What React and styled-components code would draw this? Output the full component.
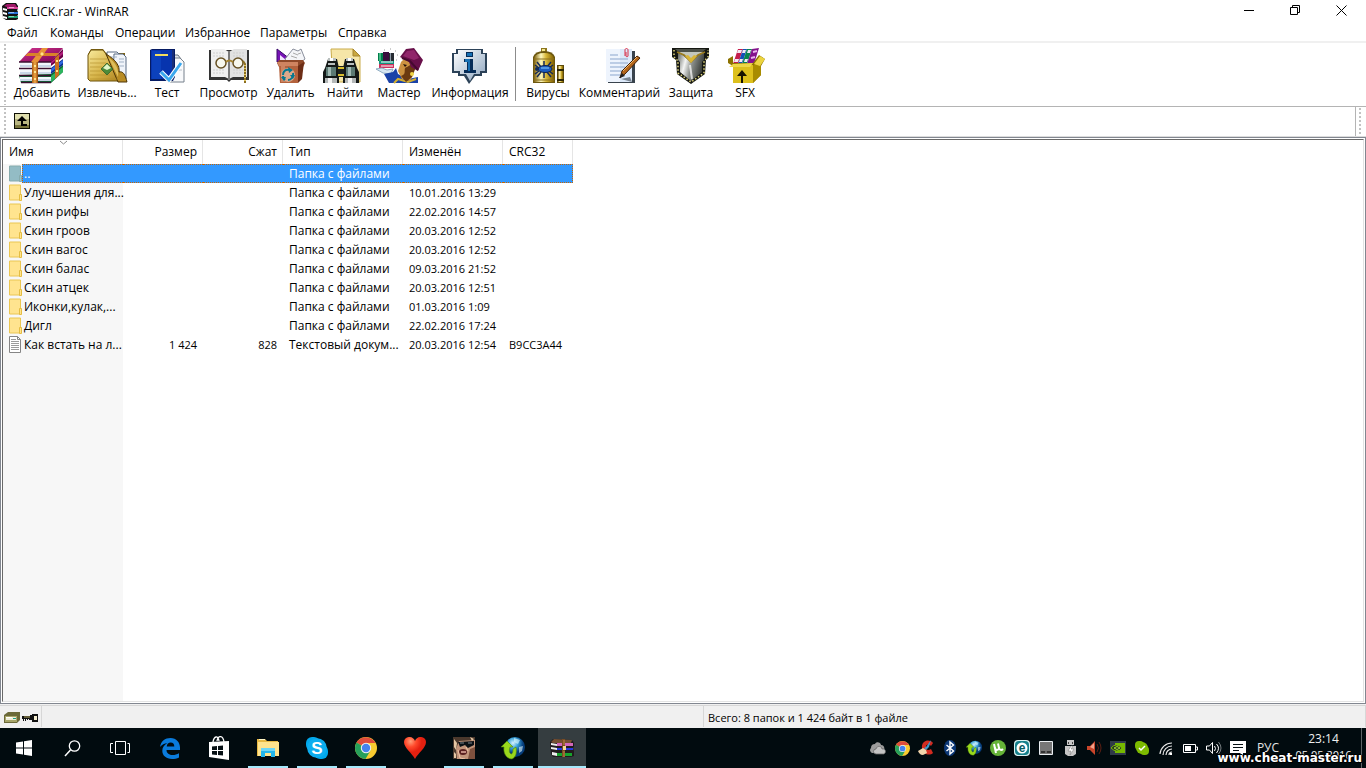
import React from "react";
import styled, { createGlobalStyle, css } from "styled-components";

const Global = createGlobalStyle`
  * { box-sizing: border-box; }
  html, body { margin: 0; padding: 0; }
  body {
    font-family: "Open Sans", "Noto Sans", sans-serif;
    font-size: 12px;
    line-height: 16px;
    color: #000;
    background: #fff;
  }
  button, input { font: inherit; color: inherit; border: 0; padding: 0; margin: 0; background: none; }
  svg { display: block; flex: none; }
`;

const Page = styled.div`
  min-height: 100vh;
  display: flex;
  flex-direction: column;
  position: relative;
`;

/* ---------- window chrome ---------- */

const TitleBar = styled.header`
  height: 23px;
  display: flex;
  align-items: center;
  padding-left: 2px;
  gap: 4px;
`;
const Title = styled.h1`
  flex: 1;
  margin: 0;
  font-size: 12px;
  font-weight: 400;
`;
const CaptionButtons = styled.div`
  display: flex;
  align-self: flex-start;
  margin-right: 2px;
`;
const CaptionButton = styled.button`
  width: 46px;
  height: 20px;
  display: grid;
  place-items: center;
`;
const MenuBar = styled.nav`
  height: 20px;
  display: flex;
  border-bottom: 2px solid #f0f0f0;
`;
const MenuItem = styled.button`
  width: ${(p) => p.$w}px;
  padding: 2px 0 0 7px;
  text-align: left;
  white-space: nowrap;
`;

const Toolbar = styled.div`
  height: 64px;
  display: flex;
  border-bottom: 1px solid #b4b4b4;
`;
const Grip = styled.span`
  width: 2px;
  margin: ${(p) => p.$m || "1px 4px 1px 4px"};
  flex: none;
  background: repeating-linear-gradient(#c2c2c2 0 2px, transparent 2px 4px);
`;
const ToolButton = styled.button`
  width: ${(p) => p.$w}px;
  flex: none;
  display: flex;
  flex-direction: column;
  align-items: center;
  gap: 1px;
  padding-top: 5px;
  white-space: nowrap;
`;
const ToolDivider = styled.span`
  width: 1px;
  margin: 4px 5px 5px 1px;
  background: #8c8c8c;
`;

const AddressBar = styled.div`
  height: 30px;
  display: flex;
  align-items: stretch;
  border-bottom: 1px solid #dcdcdc;
`;
const UpButton = styled.button`
  width: 16px;
  height: 16px;
  margin: 6px 0 0 4px;
`;
const PathField = styled.input`
  flex: 1;
  min-width: 0;
  padding: 0 8px;
  border-right: 1px solid #b4b4b4;
  outline: none;
`;

/* ---------- file list ---------- */

const ListFrame = styled.main`
  flex: 1;
  display: flex;
  border: 1px solid #828790;
  padding: 1px;
  background: #fff;
`;
const ListView = styled.div`
  flex: 1;
  border: 1px solid;
  border-color: #696969 #e3e3e3 #e3e3e3 #696969;
  background: linear-gradient(#f7f7f7, #f7f7f7) 0 0 / 120px 100% no-repeat;
`;
const Table = styled.table`
  width: 570px;
  table-layout: fixed;
  border-collapse: separate;
  border-spacing: 0;
`;
const HeadCell = styled.th`
  height: 24px;
  width: ${(p) => p.$w}px;
  padding: 0 5px 0 6px;
  font-weight: 400;
  text-align: ${(p) => (p.$right ? "right" : "left")};
  background: #fff;
  border-right: 1px solid #e5e5e5;
  position: relative;
`;
const SortMark = styled.svg`
  position: absolute;
  left: 56px;
  top: 0;
`;
const Cell = styled.td`
  height: 19px;
  padding: 0 6px;
  font-size: ${(p) => (p.$numeric ? 11 : 12)}px;
  line-height: 17px;
  text-align: ${(p) => (p.$right ? "right" : "left")};
  white-space: nowrap;
  border: 0 dotted transparent;
  border-width: 1px 0;
`;
const NameCell = styled(Cell)`
  padding: 0;
  border: 0;
`;
const NameWrap = styled.div`
  height: 19px;
  display: flex;
  align-items: center;
  padding-left: 5px;
`;
const NameText = styled.span`
  flex: 1;
  min-width: 0;
  height: 19px;
  padding-left: 1px;
  line-height: 17px;
  border: 1px dotted transparent;
  border-right: 0;
`;
const Row = styled.tr`
  ${(p) =>
    p.$selected &&
    css`
      color: #fff;
      ${Cell}:not(${NameCell}), ${NameText} {
        background: #39f;
        border-color: #c86400;
      }
      ${Cell}:last-child { border-right-width: 1px; }
    `}
`;

const StatusBar = styled.footer`
  height: 24px;
  display: flex;
  background: #f0f0f0;
  padding-top: 2px;
  background: linear-gradient(#d7d7d7, #d7d7d7) 0 1px / 100% 1px no-repeat #f0f0f0;
`;
const StatusPart = styled.div`
  display: flex;
  align-items: center;
  flex: ${(p) => (p.$grow ? "1 1 0" : "none")};
  padding: 2px 2px 0 4px;
  gap: 2px;
  font-size: 11px;
  border-right: 1px solid #d7d7d7;
  margin-bottom: 1px;
`;

/* ---------- taskbar ---------- */

const Taskbar = styled.div`
  height: 40px;
  display: flex;
  background: #010b0f;
  color: #fff;
`;
const SystemButtons = styled.div`
  display: flex;
`;
const Apps = styled.div`
  display: flex;
  gap: 1px;
  margin-left: 2px;
  flex: 1;
`;
const TaskButton = styled.button`
  width: 48px;
  height: 40px;
  display: grid;
  place-items: center;
  background-color: ${(p) => (p.$active ? "#353d40" : "transparent")};
  background-image: ${(p) => (p.$open || p.$active ? "linear-gradient(#a5e8fb, #a5e8fb)" : "none")};
  background-size: ${(p) => (p.$active ? 48 : 40)}px 2px;
  background-position: center bottom;
  background-repeat: no-repeat;
`;
const TrayButton = styled.button`
  width: 24px;
  height: 40px;
  display: grid;
  place-items: center;
`;
const Language = styled.button`
  width: 36px;
  text-align: center;
  color: #e6e6e6;
`;
const Clock = styled.time`
  width: 75px;
  padding-top: 3px;
  display: flex;
  flex-direction: column;
  align-items: center;
  line-height: 16px;
  color: #f0f0f0;
`;
const ClockDate = styled.span`
  font-size: 11px;
`;
const ShowDesktop = styled.button`
  width: 5px;
  border-left: 1px solid #5d6467;
`;
const Watermark = styled.div`
  position: absolute;
  right: 4px;
  bottom: 3px;
  font: bold 12px/14px "DejaVu Sans", sans-serif;
  color: #fff;
  text-shadow: 1px 0 #000, -1px 0 #000, 0 1px #000, 0 -1px #000, 1px 1px #000, -1px -1px #000;
`;

/* ---------- toolbar drawings ---------- */

const Big = ({ children }) => (
  <svg width="48" height="36" viewBox="0 0 48 36" aria-hidden="true">{children}</svg>
);

const AddIcon = () => (
  <Big>
    <defs>
      <linearGradient id="ad1" x2="1" y2="1"><stop stopColor="#d0358f" /><stop offset="1" stopColor="#7a0050" /></linearGradient>
      <linearGradient id="ad2"><stop stopColor="#a85a14" /><stop offset=".5" stopColor="#f0a848" /><stop offset="1" stopColor="#96480a" /></linearGradient>
    </defs>
    <path d="M1 27l32-1 12-9v7L33 35H3z" fill="#0c6a34" /><path d="M33 28l12-9v5L33 34z" fill="#2cb45e" />
    <path d="M33 20l12-9v6l-12 9z" fill="#0c2f92" /><path d="M33 21l12-9v3l-12 9z" fill="#2f6ae0" />
    <path d="M33 13L45 1v8l-12 9z" fill="#6c0048" /><path d="M33 14L45 3v3L33 16z" fill="#b01f7c" />
    <path d="M2 15h31v4H2zM2 22h31v4H2zM2 29h31v4H2z" fill="#f2f6fc" />
    <path d="M2 18h31M2 25h31M2 32h31" stroke="#bccbe0" strokeWidth="1.500" />
    <path d="M1 14L14 0h31L33 14z" fill="url(#ad1)" />
    <path d="M1 14h32M1 20.500h32M1 27.500h32M3 34.500h30" stroke="#3a1030" strokeWidth="1.600" />
    <path d="M14 14h6v21h-6z" fill="url(#ad2)" /><path d="M13 14L24 0h6L20 14z" fill="#e89438" />
    <path d="M7 8l3-3h31l-3 3z" fill="#d9822a" /><path d="M37 10l4-4v21l-4 4z" fill="#c97020" />
    <path d="M16 17h2v2h-2zM16 23h2v2h-2zM16 30h2v2h-2zM22 6l2-2 2 2-2 2zM38 12h2v2h-2zM38 22h2v2h-2z" fill="#ffe48a" />
  </Big>
);
const ExtractIcon = () => (
  <Big>
    <defs><linearGradient id="ex1" x2="1" y2="1"><stop stopColor="#f8ea9c" /><stop offset=".5" stopColor="#d8b64c" /><stop offset="1" stopColor="#a47716" /></linearGradient></defs>
    <path d="M5 6l3-5h12l3 4h19v27l-2 1H7l-2-2z" fill="#7e6416" />
    <path d="M24 4h10l4 4v20H24z" fill="#fff" stroke="#586b83" /><path d="M31 6h9l3 3v22H30z" fill="#f0f4fa" stroke="#586b83" /><path d="M27 9h7M36 11h5M36 14h5M36 18h5" stroke="#a1b1c5" />
    <path d="M5 7l3-5h12l3 4 20 27H7l-2-2z" fill="url(#ex1)" stroke="#6b5008" />
    <path d="M23 6c10 6 14 12 13 18 4-1 6 2 8 10h-9z" fill="#b98c24" stroke="#4c3508" /><path d="M25 9c8 6 11 12 10 20z" fill="#ecd374" opacity=".7" />
    <path d="M7 11h17M7 15h16M7 19h12M7 23h12M7 27h20M7 31h28" stroke="#b28d28" opacity=".6" />
    <path d="M18 21l6-6 6 6-6 6z" fill="#4c8a38" stroke="#376126" strokeWidth=".8" /><path d="M20 20l4-4 4 4-4 2z" fill="#e0f6c8" />
  </Big>
);
const TestIcon = () => (
  <Big>
    <path d="M26 7h9l3 4v22H26z" fill="#e4e7ec" stroke="#67727e" /><path d="M30 10h7l4 4v20H25z" fill="#f8f9fb" stroke="#76808c" /><path d="M33 18h6M33 22h6" stroke="#b8c0c8" />
    <path d="M7 2l2-1h23v28l-2 4H7z" fill="#061b62" /><path d="M8 2h21v29H8z" fill="#0734ae" /><path d="M9 3h9v28H9z" fill="#1551cf" opacity=".45" />
    <path d="M12 6h13v2H12z" fill="#f3dd5e" /><path d="M29 2h2v28l-2 2z" fill="#1a2f78" />
    <path d="M18 24l8 8L38 15" fill="none" stroke="#fff" strokeWidth="5" /><path d="M18 24l8 8L38 15" fill="none" stroke="#3ba8ee" strokeWidth="3" />
  </Big>
);
const ViewIcon = () => (
  <Big>
    <path d="M4 2v30h18l2 2 2-2h18V2z" fill="#333" /><path d="M6 1h13l5 3v27l-4-2H6z" fill="#efefef" /><path d="M42 1H29l-5 3v27l4-2h14z" fill="#e2e2e2" />
    <path d="M24 3v29" stroke="#7a7a7a" strokeWidth="2" /><path d="M8 5h11M8 8h12M8 22h12M8 25h12M28 5h11M28 8h12M28 22h10M28 25h10" stroke="#cfcfcf" strokeDasharray="2 1" />
    <circle cx="16" cy="15" r="5" fill="#f8f8ee" stroke="#665023" strokeWidth="1.500" /><circle cx="33" cy="15" r="5" fill="#f8f8ee" stroke="#665023" strokeWidth="1.500" />
    <path d="M21 14q3-3 7 0" fill="none" stroke="#a58430" strokeWidth="2" /><path d="M38 13l2 3v19" fill="none" stroke="#8b6e22" strokeWidth="2" /><path d="M40 17v17" stroke="#e6cc60" strokeDasharray="1 2" strokeWidth="2" />
  </Big>
);
const DeleteIcon = () => (
  <Big>
    <path d="M10 14V1l17 13z" fill="#7714b6" stroke="#3a0b68" /><path d="M13 12V7l6 5z" fill="#f4e6ff" />
    <path d="M18 11L26 1l5 2 3-2 4 10-5 4H21z" fill="#f4f5f8" stroke="#8a8f9c" /><path d="M24 8l6 2M26 5l5 2M31 6l3-1" stroke="#aaa" />
    <path d="M10 15l2-3h24l2 3-2 4H12z" fill="#8e4828" /><path d="M10 14h21v4H12z" fill="#cf8460" /><path d="M12 18h19v17H13z" fill="#b4623c" /><path d="M31 18l6-4-2 17-4 4z" fill="#6c2d16" />
    <path d="M14 18h4v16h-4z" fill="#dc9a78" opacity=".6" /><circle cx="21" cy="27" r="7" fill="#dca88a" />
    <path d="M16 27c0-4 3-6 6-5M26 25c1 4-2 7-5 7M18 32c-1-1-2-2-2-4" fill="none" stroke="#067890" strokeWidth="2" /><path d="M21 19l5 3-4 3zM28 27h-5l3 4zM14 29h5l-2 4z" fill="#067890" />
  </Big>
);
const FindIcon = () => (
  <Big>
    <path d="M10 1h22l7 7v26H12z" fill="#f6e6a8" stroke="#c9ab4a" /><path d="M32 1v7h7z" fill="#c9a740" stroke="#a58430" />
    <path d="M4 20l3-9h9l2 9v15H2V24zM22 20l2-9h9l3 9 2 4v11H22z" fill="#141817" />
    <path d="M5 19h10v9H5zM25 19h9v9h-9z" fill="#5c7a74" /><path d="M7 19h3v9H7zM27 19h3v9h-3z" fill="#a2bab4" />
    <path d="M4 30h12v5H4zM24 30h11v5H24z" fill="#b4b8b8" /><path d="M7 30h4v5H7zM27 30h4v5h-4z" fill="#f4f4f4" />
    <path d="M7 10h8v3H7zM25 10h7v3h-7zM7 15h7v2H7zM26 15h7v2h-7z" fill="#b9bfbe" /><path d="M9 10h3v3H9zM27 10h3v3h-3z" fill="#fff" />
    <path d="M17 18h6v11h-6z" fill="#1c211d" /><path d="M17 20h6M17 27h6" stroke="#d8bd2e" strokeWidth="2" />
  </Big>
);
const WizardIcon = () => (
  <Big>
    <path d="M3 5h5v8H3z" fill="#007f4a" /><path d="M4 5h2v8H4z" fill="#45b884" /><path d="M8 4h6v9H8z" fill="#3a0f3c" /><path d="M14 5h5v8h-5z" fill="#262b32" /><path d="M15 5h1v8h-1z" fill="#8e9aa8" />
    <path d="M4 13h15v3H4z" fill="#10937e" /><path d="M4 16h15v4H4z" fill="#ce315d" /><path d="M6 14h12M6 18h12" stroke="#fff" />
    <path d="M1 21l6-1 5 2 6-1-2 5-8-1z" fill="#d7e6f2" stroke="#8eabc2" /><path d="M9 26l9-2 3-4 2 6 10 5 10-2v6H14z" fill="#1a42a8" /><path d="M19 35l4-4 10 3 8-3" fill="none" stroke="#d4b030" strokeWidth="2" />
    <path d="M26 14l4-4 10 6-2 11-3 6-8-2-4-8z" fill="#cc9240" /><path d="M32 19c-5 1 1 7-6 9l5 6 6-5 4-10-4-3z" fill="#6b3a10" /><path d="M28 16l4 1-2 2z" fill="#221108" />
    <path d="M25 9L31 1l8-1 9 12-5 11-7-4-2-5z" fill="#68104a" /><path d="M28 8l4-5 7-1 5 8-5 2z" fill="#a8327c" opacity=".65" />
    <path d="M27 10l8 3 8 9" fill="none" stroke="#460a30" strokeWidth="2" /><circle cx="37" cy="26" r="2" fill="#f1d647" />
    <path d="M9 2h1M15 1h1M20 3h1M22 7h1M21 12h1" stroke="#999" />
  </Big>
);
const InfoIcon = () => (
  <Big>
    <defs><linearGradient id="in1" x2="1" y2="1"><stop stopColor="#fff" /><stop offset="1" stopColor="#8ea6c0" /></linearGradient></defs>
    <path d="M10 1h27v4h4v20h-5v3h-7l-6 8-5-8h-6v-3H6V5h4z" fill="#2c4258" /><path d="M12 2h23v4h4v17h-5v3h-6l-4 7-4-7h-6v-3H8V6h4z" fill="url(#in1)" />
    <path d="M20 4h7v5h-7zM18 11h9v11h3v3H18v-3h3v-8h-3z" fill="#062c58" /><path d="M21 5h5v3h-5zM19 11h5v12h-2v-9h-3z" fill="#1670b4" />
  </Big>
);
const VirusIcon = () => (
  <Big>
    <defs><linearGradient id="vi1"><stop stopColor="#80610c" /><stop offset=".35" stopColor="#fffac0" /><stop offset=".6" stopColor="#d8b838" /><stop offset="1" stopColor="#806000" /></linearGradient></defs>
    <path d="M17 4V0h6v4z" fill="#8c7620" /><path d="M18 1h3v3h-3z" fill="#f4e68c" />
    <path d="M9 9q2-6 11-6t11 6v26H9z" fill="#6c5810" /><path d="M10 10q2-5 10-5t10 5v24H10z" fill="url(#vi1)" />
    <path d="M10 11h20M10 32h20" stroke="#8a7020" />
    <path d="M13 14l4 5M20 13v6M27 14l-4 5M11 17l4 3M29 17l-4 3M13 29l4-5M20 30v-6M27 29l-4-5M11 26l4-3M29 26l-4-3" stroke="#162a58" strokeWidth="1.500" fill="none" />
    <ellipse cx="21" cy="21" rx="7" ry="3.500" fill="#1b5cc0" stroke="#10234c" /><path d="M17 20h8" stroke="#8cd0ff" /><circle cx="13" cy="21" r="2" fill="#112a58" />
    <path d="M33 17h7v18h-7z" fill="#5c4a0c" /><path d="M34 18h5v16h-5z" fill="url(#vi1)" /><path d="M33 22h7M33 32h7" stroke="#2b2505" strokeWidth="2" />
  </Big>
);
const CommentIcon = () => (
  <Big>
    <path d="M12 3h27v32H12z" fill="#39434d" /><path d="M10 1h26v33H10z" fill="#dce9fa" /><path d="M10 1h14v33H10z" fill="#fff" opacity=".5" />
    <path d="M14 7h8M14 11h18M14 15h18M14 19h15M14 23h12M14 27h10" stroke="#8ba6cd" />
    <path d="M29 8V2c0-2 3-2 3 0v6c0 1-2 1-2 0V4" fill="none" stroke="#d92d46" />
    <path d="M24 30l2-7L41 8l3 2-15 16z" fill="#b3651b" stroke="#442006" /><path d="M27 23L41 9" stroke="#eeb568" /><path d="M23 30l3-5 3 3z" fill="#222" />
    <path d="M25 31l9-2 2 5z" fill="#39434d" opacity=".6" />
  </Big>
);
const ShieldIcon = () => (
  <Big>
    <defs><linearGradient id="sh1" x2="1" y2=".3"><stop stopColor="#5c605a" /><stop offset=".35" stopColor="#f4f5f4" /><stop offset=".6" stopColor="#8d918d" /><stop offset="1" stopColor="#3c403c" /></linearGradient></defs>
    <path d="M5 0h37v9l-3 3-1 14-14 10L10 26 9 12 5 9z" fill="#161812" /><path d="M11 4h26v8l-2 2v10l-11 9-11-9V14l-2-2z" fill="url(#sh1)" />
    <path d="M7 2v7l4 4v12l13 9 13-9V13l4-4V2" fill="none" stroke="#e3d880" strokeWidth="1.500" strokeDasharray="1.500 2" />
    <path d="M8 1h31L24 14z" fill="#4c5048" /><path d="M12 4h24L24 12z" fill="#c2c6bc" />
    <path d="M10 4l7 3 7 7 7-7 7-3" fill="none" stroke="#9a7b1c" strokeWidth="1.500" /><path d="M18 8l6 7 6-7-3-1-3 3-3-3z" fill="#d8b436" />
    <path d="M23 17l2 14" stroke="#fff" strokeWidth="2" opacity=".7" />
  </Big>
);
const SfxIcon = () => (
  <Big>
    <path d="M12 16L17 1h5l-5 15z" fill="#c41c4c" /><path d="M17 16l5-15h4l-5 15z" fill="#1450b8" /><path d="M21 16l5-15h5l-5 15z" fill="#0a8350" /><path d="M26 16l5-15 7-1-5 16z" fill="#84128c" />
    <path d="M17 2h4l-1 3h-4zM22 2h3l-1 3h-3zM27 2h3l-1 3h-3zM14 11h4l-1 3h-4zM19 11h3l-1 3h-3zM24 11h3l-1 3h-3z" fill="#f3e9f4" /><path d="M32 4l4-1M30 10l4-1" stroke="#e8b4ec" strokeWidth="2" />
    <path d="M7 11l5-3v7h20l6-8 6 4-4 7v9l-8 8H12V18l-5-3z" fill="#8c7200" /><path d="M12 17h20v18H12z" fill="#ddc01c" /><path d="M32 18l8-8v17l-8 8z" fill="#a88c00" /><path d="M12 16l20-1-3 4H8z" fill="#eed848" /><path d="M33 16l6-8 5 3-5 7z" fill="#ecd440" />
    <path d="M20 35v-7h-4l5-6 5 6h-4v7z" fill="#181400" />
  </Big>
);

/* ---------- small drawings ---------- */

const Books = () => (
  <svg width="17" height="17" viewBox="0 0 17 17" aria-hidden="true">
    <path d="M0 3l4-3h10l2 3v3l-1 1 1 2v3l-1 1 1 1v2l-2 1H4l-3-2z" fill="#131313" />
    <path d="M2 3l3-2h8l2 3H5z" fill="#a01868" /><path d="M5 4h11v2H5z" fill="#d8459c" />
    <path d="M1 5l4 1v2L1 7zM1 9l4 1v2l-4-1zM1 13l4 1v2l-4-1z" fill="#fff" /><path d="M6 9h10v2H6z" fill="#2871d5" /><path d="M6 13h10v2H6z" fill="#1c9d73" />
    <path d="M7 4.500h5" stroke="#f2a4d3" /><path d="M7 9.500h5" stroke="#8cbcf4" /><path d="M7 13.500h5" stroke="#80dcb4" />
  </svg>
);
const FolderIcon = ({ selected }) => (
  <svg width="14" height="17" viewBox="0 0 14 17" aria-hidden="true">
    <path d="M1.500 1h11v15h-11z" fill={selected ? "#93bcc5" : "#ffe48f"} stroke={selected ? "#86abad" : "#eac652"} />
    <path d="M11.500 10.500h2v6h-2z" fill={selected ? "#9ac3cb" : "#ffe48f"} stroke={selected ? "#86abad" : "#e5bd42"} />
  </svg>
);
const TextFileIcon = () => (
  <svg width="14" height="17" viewBox="0 0 14 17" aria-hidden="true">
    <path d="M1.500.5h8l3 3v13h-11z" fill="#fff" stroke="#858585" /><path d="M9.500.5v3h3" fill="none" stroke="#858585" />
    <path d="M3 3.500h5M3 5.500h8M3 7.500h8M3 9.500h8M3 11.500h8M3 13.500h8" stroke="#9b9b9b" />
  </svg>
);

const ChromeMark = ({ size }) => (
  <svg width={size} height={size} viewBox="0 0 22 22" aria-hidden="true">
    <circle cx="11" cy="11" r="11" fill="#f8cb30" /><path d="M11 11L1.500 5.500A11 11 0 0 1 20.500 6H11z" fill="#de4c3c" /><path d="M1.500 5.500A11 11 0 0 0 10.500 22l5-8.500L11 11z" fill="#26a05b" />
    <circle cx="11" cy="11" r="5.200" fill="#f2f2f2" /><circle cx="11" cy="11" r="4.200" fill="#4383ee" />
  </svg>
);
const GlobeMark = ({ size }) => (
  <svg width={size} height={size} viewBox="0 0 24 24" aria-hidden="true">
    <defs><radialGradient id="gl1" cx=".4" cy=".3"><stop stopColor="#d9f4ff" /><stop offset=".5" stopColor="#3da4dc" /><stop offset="1" stopColor="#063d7c" /></radialGradient></defs>
    <circle cx="14" cy="11" r="10" fill="url(#gl1)" /><path d="M13 2l6 2-2 4-4-2zM18 11l4-1-1 5-3 2z" fill="#e4fbff" opacity=".6" />
    <path d="M6 5L0 11h3c-1 7 3 12 8 12 4-2 5-6 4-12l-3 2c0 4-1 5-2 5-2-1-2-4-1-7h3z" fill="#9ad81c" stroke="#4d840a" strokeWidth=".6" />
  </svg>
);

const StartMark = () => (
  <svg width="16" height="16" viewBox="0 0 16 16"><path d="M0 2.500l7-1V7.500H0zM8 1.300L16 0v7.500H8zM0 8.500h7v6l-7-1zM8 8.500h8V16l-8-1.300z" fill="#fff" /></svg>
);
const SearchMark = () => (
  <svg width="17" height="17" viewBox="0 0 17 17"><circle cx="10.500" cy="6" r="5.200" fill="none" stroke="#fff" strokeWidth="1.300" /><path d="M6.500 10L1 16" stroke="#fff" strokeWidth="1.500" /></svg>
);
const TaskViewMark = () => (
  <svg width="20" height="14" viewBox="0 0 20 14"><path d="M5.500.5h10v13h-10zM3 2.500H.5v9H3M17.500 2.500h2v9h-2" fill="none" stroke="#fff" /></svg>
);
const EdgeMark = () => (
  <svg width="20" height="21" viewBox="0 0 20 21"><path d="M0 9C1 3 5 0 10.500 0 16.500 0 20 4.500 20 9.500V12H6.500c0 3.500 3 5 6 5 2.500 0 4.500-.6 6.500-1.800v4.300C17 20.600 14.500 21 12 21 6 21 2.300 17.500 2.300 12.800c0-3.600 2.200-6.300 5-7.600C4.500 5.400 1.800 6.600 0 9zm6.700-.5h7.600C14.300 6 13 4.600 10.700 4.600 8.500 4.600 7 6.200 6.700 8.500z" fill="#0a7bdc" /></svg>
);
const StoreMark = () => (
  <svg width="22" height="24" viewBox="0 0 22 24"><path d="M5 6C6 0 10-1 11 5M9 5c1-6 6-6 7 1" fill="none" stroke="#fff" strokeWidth="1.300" /><path d="M1 6l20-1v19L1 21z" fill="#fff" /><path d="M4 10.500l5-.5v4H4zM10 10l5-.5V14h-5zM4 15h5v4l-5-.5zM10 15h5v4.500l-5-.5z" fill="#061014" /></svg>
);
const ExplorerMark = () => (
  <svg width="22" height="20" viewBox="0 0 22 20"><path d="M0 1h8l2 2h11v15H0z" fill="#e8b944" /><path d="M1 4h21v14H1z" fill="#ffe38d" /><path d="M2 1h6v1H2z" fill="#fff6c7" /><path d="M4 10h14v9h-4v-4H8v4H4z" fill="#23b6ea" /><path d="M4 10h14v3H4z" fill="#6ed6f5" /></svg>
);
const SkypeMark = () => (
  <svg width="22" height="22" viewBox="0 0 22 22"><rect x="0" y="0" width="14" height="14" rx="6" fill="#00a8ec" /><rect x="8" y="8" width="14" height="14" rx="6" fill="#00a8ec" /><circle cx="11" cy="11" r="9.800" fill="#0cadef" /><text x="11" y="17" textAnchor="middle" fontFamily="Liberation Sans" fontWeight="bold" fontSize="17" fill="#fff">S</text></svg>
);
const HeartMark = () => (
  <svg width="22" height="22" viewBox="0 0 22 22"><defs><radialGradient id="he1" cx=".3" cy=".2"><stop stopColor="#ff9d78" /><stop offset=".5" stopColor="#ff4a2c" /><stop offset="1" stopColor="#e42010" /></radialGradient></defs><path d="M11 22C8 16 0 11 0 5 0-1 9-2 11 4c2-6 11-5 11 1 0 6-8 11-11 17z" fill="url(#he1)" /></svg>
);
const GameMark = () => (
  <svg width="22" height="22" viewBox="0 0 22 22"><path d="M0 0h22v22H0z" fill="#c2947a" /><path d="M0 0h22v3L6 4 3 12l1 10H0z" fill="#4a382c" /><path d="M1 2l3 4-1 7-2-3zM17 0l4 2-2 2zM1 15l2 2v4H1z" fill="#e4c6a4" /><path d="M5 5l16-1v4l-6 3-3-3-5 2z" fill="#0b1015" /><path d="M7 6h4M15 6h4" stroke="#7a828a" /><ellipse cx="10" cy="15" rx="4" ry="3" fill="#5b2020" /><path d="M8 15h5" stroke="#e4afa0" strokeWidth="1.500" /><path d="M17 12l5-2v12h-7z" fill="#7e513e" /><path d="M5 13l2 8 5 1M13 10l2 4" fill="none" stroke="#efc4a6" /></svg>
);
const RarMark = () => (
  <svg width="24" height="20" viewBox="0 0 24 20">
    <path d="M0 4l3-3 19 1 2 3v4l-1 1 1 3v5l-3 1H3l-2-3z" fill="#211b1e" /><path d="M1 4l3-3 18 1-1 3H3z" fill="#765032" /><path d="M7 5h16v3H7z" fill="#d267b8" /><path d="M7 10h16v2H7z" fill="#2939db" /><path d="M7 15h15v3H7z" fill="#16a52c" />
    <path d="M1 5l6 1v2L1 7zM1 9l6 1v2l-6-1zM2 14l5 1v3l-5-1z" fill="#eee" /><path d="M12 1h3v18h-3z" fill="#7a4c22" /><path d="M13 8h3v4h-3z" fill="#f4d797" /><path d="M14 2v5M14 13v6" stroke="#c08a48" />
  </svg>
);

const S16 = ({ children }) => <svg width="16" height="16" viewBox="0 0 16 16" aria-hidden="true">{children}</svg>;
const tray = [
  ["OneDrive", <S16><path d="M2 13a3 3 0 0 1-1-5A4 4 0 0 1 5 4c1-3 6-2 6 1 3 0 4 3 3 5l-3 3z" fill="#9c9c9c" /><path d="M6 14a2.500 2.500 0 0 1 0-5c1-4 6-3 6 0 3-1 5 3 2 5z" fill="#c4c4c4" stroke="#666" strokeWidth=".8" /></S16>],
  ["Chrome", <ChromeMark size={15} />],
  ["CCleaner", <S16><path d="M15 3C11-2 3 1 4 8c1 7 8 8 11 5l-2-4c-3 2-5 1-5-2s3-3 5-1z" fill="#d22b20" /><path d="M13 0l-5 7-2 1 2 2 3-3z" fill="#3c97cb" /><path d="M0 11l5-3 3 2 1 3-4 2c-3 0-4-2-5-4z" fill="#f1d5ac" /></S16>],
  ["Bluetooth", <S16><ellipse cx="8" cy="8" rx="6" ry="8" fill="#0b3776" /><path d="M4.500 5l7 6L8 14V2l3.500 3-7 6" fill="none" stroke="#fff" strokeWidth="1.400" /></S16>],
  ["Загрузки", <GlobeMark size={16} />],
  ["uTorrent", <S16><circle cx="8" cy="8" r="8" fill="#65b337" /><path d="M4 4l2 9M5 8c1 3 4 2 4 0L8 3.500M9 8c1 3 3 2 4 1" fill="none" stroke="#fff" strokeWidth="2" /></S16>],
  ["Антивирус", <S16><rect width="16" height="16" rx="4" fill="#d9f1f1" /><rect x="1" y="1" width="14" height="14" rx="4" fill="#16808b" /><circle cx="8" cy="8" r="5.500" fill="#fff" /><text x="8" y="12" textAnchor="middle" fontFamily="Liberation Sans" fontWeight="bold" fontSize="12" fill="#075c66">e</text></S16>],
  ["Сенсорная панель", <S16><path d="M1.500 1.500h13v13h-13z" fill="#777" stroke="#e8edf1" /><path d="M3 11h10v2H3z" fill="#333" /><path d="M7.500 11h1v2h-1z" fill="#999" /></S16>],
  ["Извлечение устройства", <S16><path d="M5 0h7v5H5zM3 6h11v8l-3 2H6l-3-2z" fill="#c6c6c6" /><path d="M6 2h1v2H6zM10 2h1v2h-1z" fill="#444" /><path d="M9 6l-3 5h3l-1 4 4-6H9l2-3z" fill="#fff" stroke="#777" strokeWidth=".5" /></S16>],
  ["Звук", <S16><path d="M1 6h3l5-5v14l-5-5H1z" fill="#c9452a" /><path d="M4 7l4-4v6z" fill="#f2a28b" /><path d="M11 4q3 4 0 8M13 2q4 6 0 12" fill="none" stroke="#5b1e12" /></S16>],
  ["NVIDIA", <S16><path d="M0 1h16v14H0z" fill="#303a48" /><path d="M5 3h10v10H5z" fill="#76b900" /><path d="M1 8q5-6 11 0-5 6-11 0z" fill="#263022" stroke="#76b900" /><path d="M4 8q3-3 6 0-3 3-6 0z" fill="none" stroke="#9cdd2b" /></S16>],
  ["Skype", <S16><rect x="1" y="1" width="9" height="9" rx="4" fill="#7dbb00" /><rect x="6" y="6" width="9" height="9" rx="4" fill="#7dbb00" /><circle cx="8" cy="8" r="6" fill="#7dbb00" /><path d="M5 8l2 2 4-4" fill="none" stroke="#fff" strokeWidth="1.500" /></S16>],
  ["Сеть", <S16><g fill="none" stroke="#e9e9e9" strokeWidth="1.200"><path d="M2 14A12 12 0 0 1 14 3M5 15A9 9 0 0 1 14 6M8 15a6 6 0 0 1 6-6M11 15a3 3 0 0 1 3-3" /></g><path d="M12 13h2v2h-2z" fill="#fff" /></S16>],
  ["Батарея", <S16><path d="M1.500 4.500h12v8h-12zM14 7h1.500v3H14" fill="none" stroke="#fff" /><path d="M3 6h6v5H3z" fill="#fff" /></S16>],
  ["Громкость", <S16><path d="M.5 6h3l3-3.500v11L3.500 10h-3z" fill="none" stroke="#fff" /><path d="M8.500 6q2 2.500 0 5M10.500 4q4 4 0 9" fill="none" stroke="#fff" /><path d="M12.500 2q5 6 0 12" fill="none" stroke="#747b7e" /></S16>],
  ["Центр уведомлений", <S16><path d="M0 1h16v12h-3v3l-3-3H0z" fill="#fff" /><path d="M3 4.500h10M3 7.500h10M3 10.500h6" stroke="#061014" /></S16>],
];

const menus = [["Файл", 43], ["Команды", 65], ["Операции", 70], ["Избранное", 75], ["Параметры", 78], ["Справка", 60]];

const tools = [
  ["Добавить", 64, AddIcon], ["Извлечь...", 66, ExtractIcon], ["Тест", 54, TestIcon], ["Просмотр", 69, ViewIcon],
  ["Удалить", 55, DeleteIcon], ["Найти", 54, FindIcon], ["Мастер", 54, WizardIcon], ["Информация", 88, InfoIcon],
  null,
  ["Вирусы", 54, VirusIcon], ["Комментарий", 89, CommentIcon], ["Защита", 54, ShieldIcon], ["SFX", 54, SfxIcon],
];

const columns = [["Имя", 120], ["Размер", 80, true], ["Сжат", 80, true], ["Тип", 120], ["Изменён", 100], ["CRC32", 70]];

const folder = "Папка с файлами";
const files = [
  ["..", "", "", folder, "", ""],
  ["Улучшения для...", "", "", folder, "10.01.2016 13:29", ""],
  ["Скин рифы", "", "", folder, "22.02.2016 14:57", ""],
  ["Скин гроов", "", "", folder, "20.03.2016 12:52", ""],
  ["Скин вагос", "", "", folder, "20.03.2016 12:52", ""],
  ["Скин балас", "", "", folder, "09.03.2016 21:52", ""],
  ["Скин атцек", "", "", folder, "20.03.2016 12:51", ""],
  ["Иконки,кулак,...", "", "", folder, "01.03.2016 1:09", ""],
  ["Дигл", "", "", folder, "22.02.2016 17:24", ""],
  ["Как встать на л...", "1 424", "828", "Текстовый докум...", "20.03.2016 12:54", "B9CC3A44"],
];

const apps = [
  ["Edge", <EdgeMark />], ["Магазин", <StoreMark />], ["Проводник", <ExplorerMark />, true], ["Skype", <SkypeMark />, true],
  ["Chrome", <ChromeMark size={22} />, true], ["Игры", <HeartMark />], ["GTA", <GameMark />, true],
  ["Загрузчик", <GlobeMark size={24} />, true], ["WinRAR", <RarMark />, true, true],
];

export default function App() {
  return (
    <Page>
      <Global />
      <TitleBar>
        <Books />
        <Title>CLICK.rar - WinRAR</Title>
        <CaptionButtons>
          <CaptionButton aria-label="Свернуть"><svg width="10" height="10"><path d="M0 5.500h10" stroke="#000" /></svg></CaptionButton>
          <CaptionButton aria-label="Восстановить"><svg width="10" height="10"><path d="M.5 2.500h7v7h-7zM2.500 2.500v-2h7v7h-2" fill="none" stroke="#000" /></svg></CaptionButton>
          <CaptionButton aria-label="Закрыть"><svg width="11" height="11"><path d="M.5.5l10 10M10.500.5l-10 10" stroke="#000" /></svg></CaptionButton>
        </CaptionButtons>
      </TitleBar>
      <MenuBar>
        {menus.map(([label, w]) => <MenuItem key={label} $w={w}>{label}</MenuItem>)}
      </MenuBar>
      <Toolbar>
        <Grip />
        {tools.map((t) => {
          if (!t) return <ToolDivider key="divider" />;
          const [label, w, Icon] = t;
          return <ToolButton key={label} $w={w}><Icon />{label}</ToolButton>;
        })}
      </Toolbar>
      <AddressBar>
        <Grip />
        <UpButton aria-label="На уровень выше">
          <svg width="16" height="16" viewBox="0 0 16 16"><path d="M0 0h16v16H0z" fill="#0d0d03" /><path d="M1 1h14v14H1z" fill="#b8b581" /><path d="M1 1h14v5H1z" fill="#e0dfae" /><path d="M1 12h14v3H1z" fill="#77733b" /><path d="M8 3L3 8h4v5h6v-2H9V8h4z" fill="#000" /></svg>
        </UpButton>
        <PathField aria-label="Путь" />
        <Grip $m="1px 5px 1px 3px" />
      </AddressBar>
      <ListFrame>
        <ListView>
          <Table>
            <thead>
              <tr>
                {columns.map(([label, w, right], i) => (
                  <HeadCell key={label} $w={w} $right={right}>
                    {label}
                    {i === 0 && <SortMark width="9" height="6"><path d="M1 1l3.500 3L8 1" fill="none" stroke="#8a8a8a" /></SortMark>}
                  </HeadCell>
                ))}
              </tr>
            </thead>
            <tbody>
              {files.map(([name, ...rest], i) => (
                <Row key={name} $selected={i === 0}>
                  <NameCell>
                    <NameWrap>
                      {i === files.length - 1 ? <TextFileIcon /> : <FolderIcon selected={i === 0} />}
                      <NameText>{name}</NameText>
                    </NameWrap>
                  </NameCell>
                  {rest.map((value, c) => <Cell key={c} $right={c < 2} $numeric={c !== 2}>{value}</Cell>)}
                </Row>
              ))}
            </tbody>
          </Table>
        </ListView>
      </ListFrame>
      <StatusBar>
        <StatusPart>
          <svg width="16" height="12" viewBox="0 0 16 12"><path d="M0 3l4-3h12v8l-3 3H0z" fill="#6b6939" /><path d="M1 4h12v6H1z" fill="#a7a569" /><path d="M2 5h10v3H2z" fill="#eeedd8" /><path d="M2 5h6v1H2z" fill="#fff" /><path d="M9 6h3v1H9z" fill="#1ba087" /></svg>
          <svg width="17" height="10" viewBox="0 0 17 10"><path d="M0 3h8V2h2V1h6v8h-6V7H7V6H6v1H5V6H4v2H3V6H2v2H1V6H0z" fill="#111" /><path d="M12 3h3v4h-3z" fill="#f4edce" /><path d="M2 4h6" stroke="#b4a75c" /></svg>
        </StatusPart>
        <StatusPart $grow />
        <StatusPart $grow>Всего: 8 папок и 1 424 байт в 1 файле</StatusPart>
      </StatusBar>
      <Taskbar>
        <SystemButtons>
          <TaskButton aria-label="Пуск"><StartMark /></TaskButton>
          <TaskButton aria-label="Поиск"><SearchMark /></TaskButton>
          <TaskButton aria-label="Представление задач"><TaskViewMark /></TaskButton>
        </SystemButtons>
        <Apps>
          {apps.map(([label, icon, open, active]) => (
            <TaskButton key={label} aria-label={label} $open={open} $active={active}>{icon}</TaskButton>
          ))}
        </Apps>
        {tray.map(([label, icon]) => <TrayButton key={label} aria-label={label}>{icon}</TrayButton>)}
        <Language>РУС</Language>
        <Clock><span>23:14</span><ClockDate>05.05.2016</ClockDate></Clock>
        <ShowDesktop aria-label="Показать рабочий стол" />
      </Taskbar>
      <Watermark>www.cheat-master.ru</Watermark>
    </Page>
  );
}
